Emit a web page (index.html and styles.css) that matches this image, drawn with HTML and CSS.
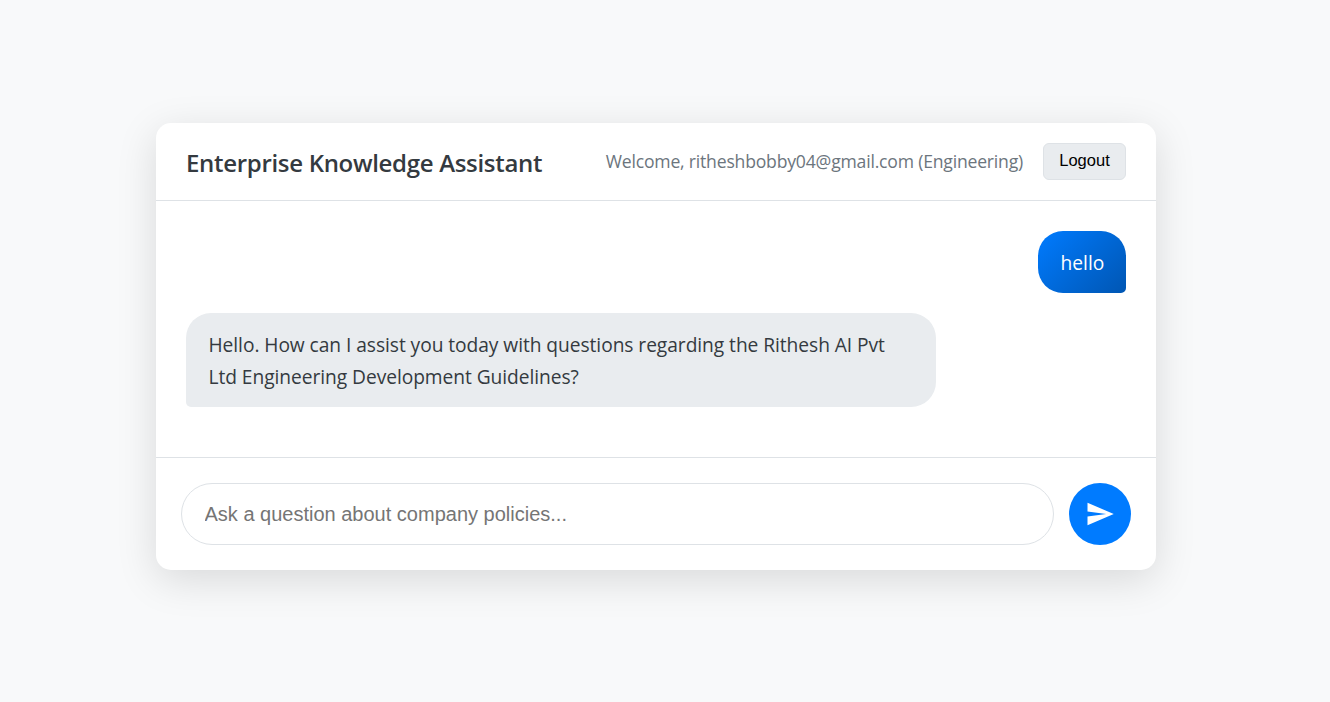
FILE: index.html
```html
<!DOCTYPE html>
<html lang="en">
<head>
<meta charset="utf-8">
<title>Enterprise Knowledge Assistant</title>
<link rel="stylesheet" href="styles.css">
</head>
<body>
<main class="chat">
  <header class="chat-header">
    <h1 class="title">Enterprise Knowledge Assistant</h1>
    <div class="user">
      <span class="welcome">Welcome, ritheshbobby04@gmail.com (Engineering)</span>
      <button class="logout">Logout</button>
    </div>
  </header>
  <section class="messages">
    <div class="message message-user">hello</div>
    <div class="message message-bot"><span class="line">Hello. How can I assist you today with questions regarding the Rithesh AI Pvt</span><span class="line">Ltd Engineering Development Guidelines?</span></div>
  </section>
  <form class="composer">
    <input class="field" type="text" placeholder="Ask a question about company policies...">
    <button class="send" type="button" aria-label="Send">
      <svg class="send-icon" viewBox="0 0 24 24"><path d="M2.01 21L23 12 2.01 3 2 10l15 2-15 2z"/></svg>
    </button>
  </form>
</main>
</body>
</html>
```
FILE: styles.css
```css
* { box-sizing: border-box; }
body {
  margin: 0;
  height: 702px;
  padding: 123px 174px 0 156px;
  background: #f8f9fa;
  color: #343a40;
  font-family: "Segoe UI", "Open Sans", sans-serif;
}
.chat {
  width: 1000px;
  height: 447px;
  display: flex;
  flex-direction: column;
  background: #fff;
  border-radius: 15px;
  box-shadow: 0 10px 40px rgba(0, 0, 0, 0.13);
}
.chat-header {
  height: 78px;
  padding: 0 30px;
  display: flex;
  align-items: center;
  justify-content: space-between;
  border-bottom: 1px solid #dee2e6;
}
.title { margin: 0; padding-top: 3px; font-size: 24px; font-weight: 600; line-height: 32px; letter-spacing: -0.31px; white-space: nowrap; }
.user { display: flex; align-items: center; gap: 20px; }
.welcome { padding-bottom: 2px; color: #6c757d; font-size: 17.6px; letter-spacing: -0.2px; white-space: nowrap; }
.logout {
  width: 83px;
  height: 37px;
  padding: 0 0 2px;
  border: 1px solid #dee2e6;
  border-radius: 6px;
  background: #e9ecef;
  color: #000;
  font: 16.5px "Liberation Sans", Arial, sans-serif;
}
.messages {
  flex: 1;
  padding: 30px;
  display: flex;
  flex-direction: column;
  gap: 20px;
}
.message { padding: 16px 22.5px 14px; font-size: 19.2px; line-height: 32px; }
.message-user {
  align-self: flex-end;
  width: 88px;
  height: 62px;
  border-radius: 25px 25px 5px 25px;
  background: linear-gradient(135deg, #007bff, #0056b3);
  color: #fff;
}
.message-bot {
  width: 750px;
  height: 94px;
  border-radius: 25px 25px 25px 5px;
  background: #e9ecef;
  letter-spacing: -0.055px;
}
.line { display: block; white-space: nowrap; }
.composer {
  height: 113px;
  padding: 25px;
  display: flex;
  gap: 15px;
  border-top: 1px solid #dee2e6;
}
.field {
  flex: 1;
  height: 62px;
  padding: 0 22.5px;
  border: 1px solid #dee2e6;
  border-radius: 31px;
  background: #fff;
  font: 20px "Liberation Sans", Arial, sans-serif;
}
.field::placeholder { color: #757575; }
.send {
  width: 62px;
  height: 62px;
  padding: 0;
  display: flex;
  align-items: center;
  justify-content: center;
  border: 0;
  border-radius: 50%;
  background: #007bff;
}
.send-icon { width: 30px; height: 30px; fill: #fff; }
```
